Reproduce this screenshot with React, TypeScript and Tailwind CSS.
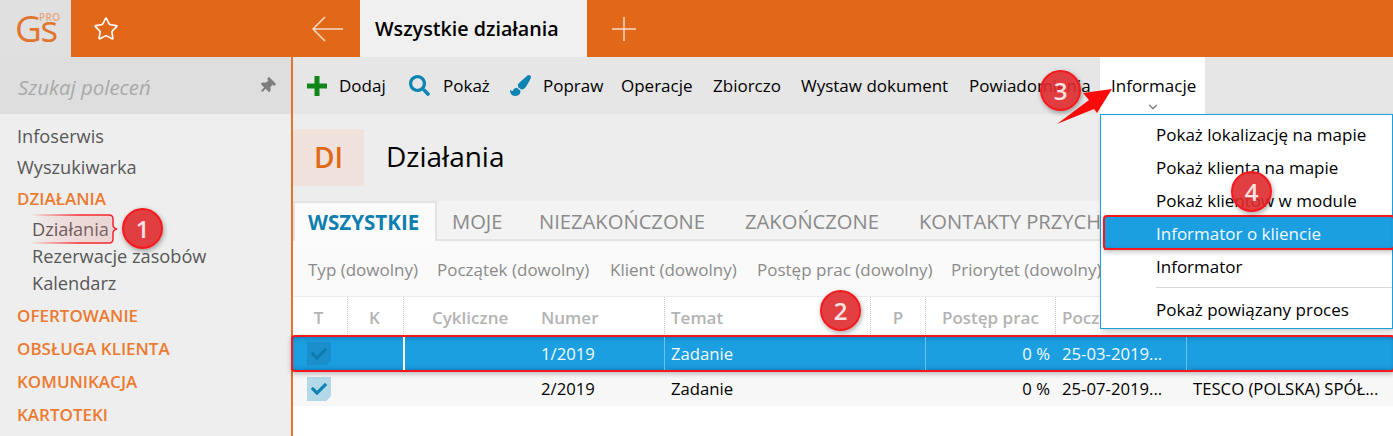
import { Star, ChevronDown } from "lucide-react";
import { FaCheck, FaPaintBrush, FaSearch, FaThumbtack } from "react-icons/fa";

const font = { fontFamily: '"Open Sans", "Noto Sans", sans-serif' };

const tools = [
  { label: "Operacje", w: "w-[92px]" },
  { label: "Zbiorczo", w: "w-[88px]" },
  { label: "Wystaw dokument", w: "w-[168px]" },
  { label: "Powiadomienia", w: "w-[131px]" },
];

const tabs = [
  { label: "MOJE", w: "w-[87px]" },
  { label: "NIEZAKOŃCZONE", w: "w-[206px]" },
  { label: "ZAKOŃCZONE", w: "w-[174px]" },
  { label: "KONTAKTY PRZYCHODZĄCE", w: "w-[300px]" },
];

const filters = [
  { label: "Typ (dowolny)", w: "w-[129px]" },
  { label: "Początek (dowolny)", w: "w-[173px]" },
  { label: "Klient (dowolny)", w: "w-[147px]" },
  { label: "Postęp prac (dowolny)", w: "w-[194px]" },
  { label: "Priorytet (dowolny)", w: "w-[190px]" },
];

const cols = "grid grid-cols-[54px_56px_131px_130px_206px_55px_130px_131px_1fr]";

function Badge({ n, className }: { n: number; className: string }) {
  return (
    <div
      className={`absolute w-[41px] h-[41px] rounded-full bg-[#df2a2e]/90 border-2 border-[#f5181c] flex items-center justify-center text-[#fbe3e3] text-[24px] font-semibold shadow-[1px_2px_5px_rgba(0,0,0,0.35)] ${className}`}
    >
      {n}
    </div>
  );
}

function Box({ dark }: { dark?: boolean }) {
  return (
    <div
      className={`w-[24px] h-[24px] ml-[14px] flex items-center justify-center [clip-path:polygon(0_0,100%_0,100%_80%,80%_100%,0_100%)] ${dark ? "bg-[#1a8fcb]" : "bg-[#b3d9e9]"}`}
    >
      <FaCheck className={`w-[16px] h-[16px] ${dark ? "text-[#0f7db3]" : "text-[#0e84b4]"}`} />
    </div>
  );
}

export default function App() {
  return (
    <div style={font} className="relative w-[1393px] h-[436px] overflow-hidden bg-white text-[17px] text-black">
      {/* top bar */}
      <div className="flex h-[57px] bg-[#e06818]">
        <div className="relative w-[71px] bg-[#e0e0e0] text-[#e0752f]">
          <span className="absolute left-[15px] top-[6px] text-[37px] leading-[44px] tracking-[-1.5px]">Gs</span>
          <span className="absolute left-[39px] top-[12px] text-[10px] leading-[10px] font-semibold tracking-[0.3px] text-[#eba57a]">PRO</span>
        </div>
        <div className="w-[70px] flex items-center justify-center">
          <Star className="w-[26px] h-[26px] text-white" strokeWidth={1.5} />
        </div>
        <div className="w-[219px] flex items-center justify-end pr-[17px]">
          <svg width="32" height="26" viewBox="0 0 32 26" fill="none" stroke="#f8dcc8" strokeWidth="1.5">
            <path d="M14 1 L2 13 L14 25 M2 13 H32" />
          </svg>
        </div>
        <div className="w-[227px] bg-[#f0f0f0] pl-[15px] flex items-center text-[19.7px] font-semibold">
          Wszystkie działania
        </div>
        <div className="w-[74px] flex items-center justify-center">
          <svg width="26" height="26" viewBox="0 0 26 26" stroke="#f8dcc8" strokeWidth="1.5">
            <path d="M13 1 V25 M1 13 H25" />
          </svg>
        </div>
      </div>

      <div className="flex h-[379px]">
        {/* sidebar */}
        <div className="w-[293px] shrink-0 h-full bg-[#eeeeee] border-r-2 border-[#e0752f]">
          <div className="h-[57px] bg-[#dedede] flex items-center justify-between pl-[18px] pr-[16px] text-[#a9a9a9] text-[20.4px] italic">
            <span className="pt-[3px]">Szukaj poleceń</span>
            <FaThumbtack className="w-[16px] h-[16px] text-[#7d7d7d] rotate-45" />
          </div>
          <div className="pl-[17px] pt-[7px] text-[18.2px] text-[#575757] leading-[31px]">
            <div>Infoserwis</div>
            <div>Wyszukiwarka</div>
            <div className="text-[#ec7a30] font-semibold text-[17px]">DZIAŁANIA</div>
            <div className="ml-[15px] leading-[27px] mt-[2px]">
              <div>Działania</div>
              <div>Rezerwacje zasobów</div>
              <div>Kalendarz</div>
            </div>
            <div className="text-[#ec7a30] font-semibold text-[17px] leading-[33px] mt-[2px]">
              <div>OFERTOWANIE</div>
              <div>OBSŁUGA KLIENTA</div>
              <div>KOMUNIKACJA</div>
              <div>KARTOTEKI</div>
            </div>
          </div>
        </div>

        {/* main */}
        <div className="flex-1 min-w-0 h-full">
          <div className="h-[57px] bg-[#e6e6e6] flex items-center">
            <div className="flex items-center pl-[14px] w-[116px]">
              <svg width="20" height="20" viewBox="0 0 20 20" fill="#12851a" className="mr-[12px]">
                <path d="M7.5 0 H12.5 V7.5 H20 V12.5 H12.5 V20 H7.5 V12.5 H0 V7.5 H7.5 Z" />
              </svg>
              Dodaj
            </div>
            <div className="flex items-center w-[101px]">
              <FaSearch className="w-[21px] h-[21px] mr-[13px] text-[#0e84b4]" />
              Pokaż
            </div>
            <div className="flex items-center w-[111px]">
              <FaPaintBrush className="w-[21px] h-[21px] mr-[12px] text-[#0e84b4]" />
              Popraw
            </div>
            {tools.map((t) => (
              <div key={t.label} className={`${t.w} whitespace-nowrap`}>{t.label}</div>
            ))}
            <div className="relative w-[105px] h-full bg-white pl-[11px] flex items-center">
              Informacje
              <ChevronDown className="absolute left-[46px] bottom-[0px] w-[14px] h-[14px] text-[#777]" />
            </div>
          </div>

          <div className="h-[87px] bg-[#ededed] flex items-center">
            <div className="w-[71px] h-[57px] bg-[#efe2dc] flex items-center justify-center text-[#e06818] text-[28px] font-semibold pb-[2px]">
              DI
            </div>
            <div className="ml-[22px] text-[28px] pb-[4px]">Działania</div>
          </div>

          <div className="h-[40px] bg-[#f3f3f3] flex text-[20.2px] text-[#8a8a8a] overflow-hidden">
            <div className="w-[144px] h-[40px] shrink-0 bg-[#fbfbfb] border-r-2 border-t-2 border-l-2 border-[#e3e3e3] pl-[13px] flex items-center text-[#0e7fb0] font-bold text-[20.6px]">
              WSZYSTKIE
            </div>
            {tabs.map((t) => (
              <div key={t.label} className={`${t.w} shrink-0 pl-[15px] pt-[2px] flex items-center whitespace-nowrap border-b-2 border-[#e3e3e3]`}>{t.label}</div>
            ))}
          </div>

          <div className="h-[56px] bg-[#fafafa] flex items-center pl-[15px] pt-[2px] text-[17px] text-[#8a8a8a] border-b border-[#ebebeb]">
            {filters.map((f) => (
              <div key={f.label} className={`${f.w} shrink-0 whitespace-nowrap`}>{f.label}</div>
            ))}
          </div>

          <div className={`${cols} h-[39px] items-center bg-white text-[17px] font-semibold text-[#b3b3b3]`}>
            <div className="text-center pr-[3px] pt-[2px] h-full flex items-center justify-center">T</div>
            <div className="h-full flex items-center justify-center border-l border-dotted border-[#c8c8c8] pr-[2px] pt-[2px]">K</div>
            <div className="h-full flex items-center pl-[28px] pt-[2px] border-l border-dotted border-[#c8c8c8]">Cykliczne</div>
            <div className="h-full flex items-center pl-[7px] pt-[2px]">Numer</div>
            <div className="h-full flex items-center pl-[6px] pt-[2px] border-l border-dotted border-[#c8c8c8]">Temat</div>
            <div className="h-full flex items-center justify-center pt-[2px] border-l border-dotted border-[#c8c8c8]">P</div>
            <div className="h-full flex items-center pl-[16px] pt-[2px] border-l border-dotted border-[#c8c8c8] whitespace-nowrap">Postęp prac</div>
            <div className="h-full flex items-center pl-[6px] pt-[2px] border-l border-dotted border-[#c8c8c8] whitespace-nowrap overflow-hidden">Początek</div>
            <div />
          </div>

          <div className={`${cols} h-[35px] items-center bg-[#1b9fe0] text-[#f2f9fd] text-[16.7px] shadow-[inset_0_5px_5px_-3px_rgba(0,50,110,0.35),inset_0_-5px_5px_-3px_rgba(0,50,110,0.3)]`}>
            <Box dark />
            <div />
            <div className="h-full border-l-2 border-white" />
            <div className="pl-[7px]">1/2019</div>
            <div className="h-full flex items-center pl-[6px] border-l border-[#6cc1ec]">Zadanie</div>
            <div />
            <div className="h-full flex items-center justify-end pr-[5px] border-l border-[#6cc1ec]">0 %</div>
            <div className="pl-[7px] whitespace-nowrap">25-03-2019...</div>
            <div className="h-full border-l border-[#6cc1ec]" />
          </div>
          <div className={`${cols} h-[34px] mt-[1px] items-center bg-[#f7f7f7] text-[16.7px]`}>
            <Box />
            <div />
            <div />
            <div className="pl-[7px]">2/2019</div>
            <div className="pl-[7px]">Zadanie</div>
            <div />
            <div className="text-right pr-[5px]">0 %</div>
            <div className="pl-[7px] whitespace-nowrap">25-07-2019...</div>
            <div className="pl-[7px] whitespace-nowrap overflow-hidden">TESCO (POLSKA) SPÓŁ...</div>
          </div>
        </div>
      </div>

      {/* dropdown */}
      <div className="absolute left-[1100px] top-[114px] w-[293px] h-[215px] bg-white border border-[#1b9fe0] pl-[55px] pt-[3px] text-[17px] leading-[33px] shadow-[2px_3px_6px_rgba(0,0,0,0.2)]">
        <div>Pokaż lokalizację na mapie</div>
        <div>Pokaż klienta na mapie</div>
        <div>Pokaż klientów w module</div>
        <div className="-ml-[52px] pl-[52px] bg-[#1b9fe0] text-[#f2f9fd] shadow-[inset_0_-4px_4px_-3px_rgba(0,50,110,0.3)]">Informator o kliencie</div>
        <div>Informator</div>
        <div className="h-px bg-[#d8d8d8] mt-[4px] mb-[5px]" />
        <div>Pokaż powiązany proces</div>
      </div>

      {/* annotations */}
      <svg className="absolute left-[30px] top-[212px]" width="92" height="34" viewBox="0 0 92 34">
        <defs>
          <linearGradient id="hl" x1="0" x2="1" y1="0" y2="0">
            <stop offset="0" stopColor="#f25555" stopOpacity="0" />
            <stop offset="0.5" stopColor="#e88" stopOpacity="0.2" />
            <stop offset="1" stopColor="#d88" stopOpacity="0.25" />
          </linearGradient>
          <linearGradient id="hs" x1="0" x2="1" y1="0" y2="0">
            <stop offset="0" stopColor="#f5282c" stopOpacity="0.05" />
            <stop offset="0.55" stopColor="#f5282c" />
          </linearGradient>
        </defs>
        <path
          d="M2 3 H79 Q83 3 83 7 V13 Q83 16 87 17 Q83 18 83 21 V27 Q83 31 79 31 H2"
          fill="url(#hl)"
          stroke="url(#hs)"
          strokeWidth="1.5"
        />
      </svg>
      <div className="absolute left-[291px] top-[335px] w-[1104px] h-[37px] rounded-[4px] border-2 border-[#f5181c] shadow-[0_2px_5px_rgba(0,0,0,0.25)]" />
      <div className="absolute left-[1103px] top-[215px] w-[292px] h-[35px] rounded-[4px] border-2 border-[#f5181c] shadow-[0_2px_5px_rgba(0,0,0,0.25)]" />
      <svg className="absolute left-[1050px] top-[80px]" width="70" height="50" viewBox="0 0 70 50" fill="#fb0a0a">
        <path d="M62 9 L33 13 L39 20 L7 44 L44 29 L47 33 Z" />
      </svg>
      <Badge n={1} className="left-[122px] top-[208px]" />
      <Badge n={2} className="left-[820px] top-[290px]" />
      <Badge n={3} className="left-[1040px] top-[70px]" />
      <Badge n={4} className="left-[1231px] top-[171px]" />
    </div>
  );
}
